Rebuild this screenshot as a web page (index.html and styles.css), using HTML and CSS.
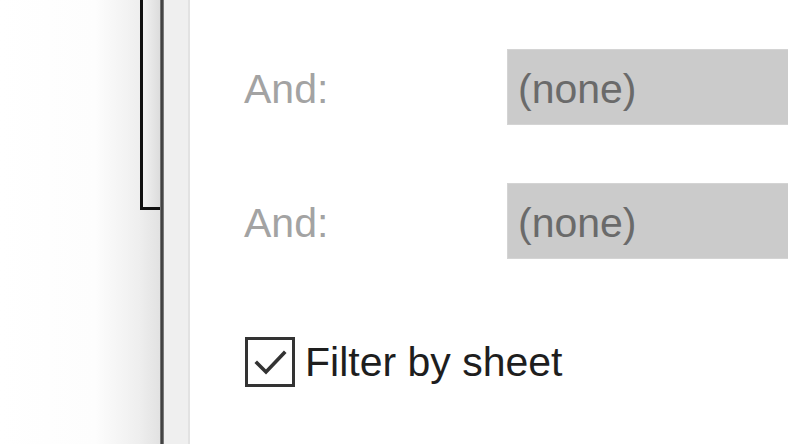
FILE: index.html
```html
<!DOCTYPE html>
<html>
<head>
<meta charset="utf-8">
<link rel="stylesheet" href="styles.css">
</head>
<body>
<div class="screen">
  <div class="backdrop">
    <div class="frame"></div>
  </div>
  <div class="divider"></div>
  <div class="strip"></div>
  <div class="panel">
    <div class="row">
      <span class="label">And:</span>
      <div class="combo">(none)</div>
    </div>
    <div class="row">
      <span class="label">And:</span>
      <div class="combo">(none)</div>
    </div>
    <label class="check-row">
      <span class="checkbox">
        <svg width="44" height="44" viewBox="0 0 44 44"><path d="M9 23 L18 32 L36 13" fill="none" stroke="#333" stroke-width="3.6" stroke-linecap="square"/></svg>
      </span>
      <span class="check-text">Filter by sheet</span>
    </label>
  </div>
</div>
</body>
</html>
```
FILE: styles.css
```css
html, body {
  margin: 0;
  padding: 0;
  width: 788px;
  height: 444px;
  overflow: hidden;
  background: #ffffff;
}
.screen {
  display: flex;
  height: 444px;
  font-family: "Liberation Sans", Arial, sans-serif;
}
.backdrop {
  width: 160px;
  flex: none;
  display: flex;
  justify-content: flex-end;
  align-items: flex-start;
  background: linear-gradient(to right, #ffffff 0, #fdfdfd 95px, #eeeeee 140px, #e2e2e2 160px);
}
.frame {
  width: 17px;
  height: 207px;
  border-left: 3px solid #111111;
  border-bottom: 3px solid #111111;
  background: linear-gradient(to right, #f2f2f2, #dcdcdc);
}
.divider {
  width: 4px;
  flex: none;
  background: linear-gradient(to right, #8a8a8a, #3c3c3c 40%, #4a4a4a 70%, #9a9a9a);
}
.strip {
  width: 24px;
  flex: none;
  background: #efefef;
  border-right: 2px solid #e2e2e2;
}
.panel {
  flex: 1;
  min-width: 0;
  background: #ffffff;
  padding: 49px 0 0 54px;
  display: flex;
  flex-direction: column;
}
.row {
  display: flex;
  align-items: center;
  height: 76px;
  margin-bottom: 58px;
}
.label {
  width: 263px;
  flex: none;
  font-size: 41px;
  padding-top: 4px;
  color: #a3a3a3;
}
.combo {
  flex: 1;
  min-width: 0;
  height: 76px;
  box-sizing: border-box;
  background: #cbcbcb;
  border: 1px solid #d4d4d4;
  border-right: none;
  padding: 4px 0 0 10px;
  display: flex;
  align-items: center;
  font-size: 41px;
  color: #6a6a6a;
}
.check-row {
  display: flex;
  align-items: center;
  margin-top: 20px;
}
.checkbox {
  width: 50px;
  height: 50px;
  box-sizing: border-box;
  border: 3px solid #333333;
  background: #ffffff;
  display: flex;
  align-items: center;
  justify-content: center;
  margin-left: 1px;
}
.check-text {
  margin-left: 10px;
  font-size: 41px;
  color: #1e1e1e;
}
```
